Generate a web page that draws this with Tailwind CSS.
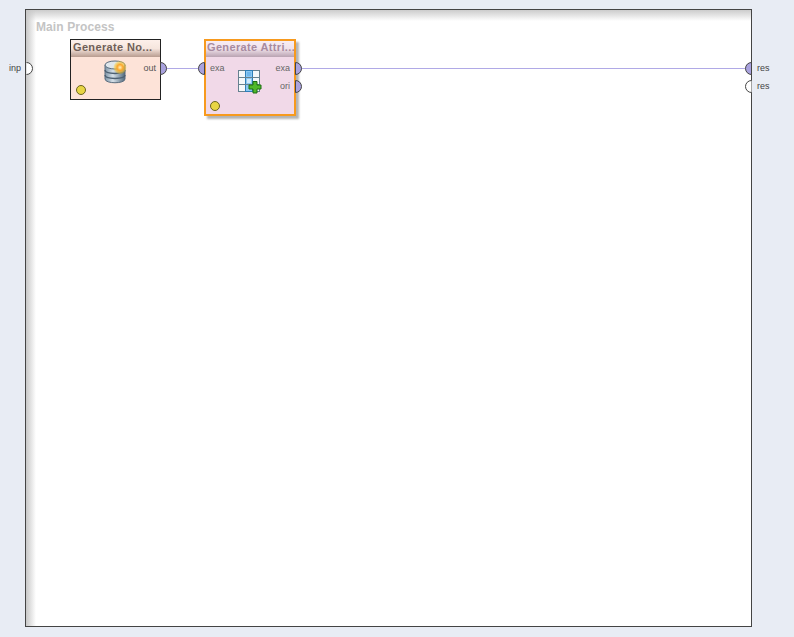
<!DOCTYPE html>
<html lang="en">
<head>
  <meta charset="UTF-8" />
  <title>Main Process</title>
  <script src="https://cdn.jsdelivr.net/npm/@tailwindcss/browser@4"></script>
</head>
<body class="w-[794px] h-[637px] bg-[#e8ecf4] overflow-hidden font-['Liberation_Sans',sans-serif]">
  <div class="relative w-[794px] h-[637px]">

    <!-- process canvas -->
    <div class="absolute left-[25px] top-[9px] w-[727px] h-[618px] border border-[#444444] bg-white">
      <div class="absolute left-0 top-0 w-full h-[11px] bg-gradient-to-b from-[#cccccc] to-white"></div>
      <div class="absolute left-0 top-0 h-full w-[10px] bg-gradient-to-r from-[#c8c8c8] to-white/0"></div>
      <div class="absolute left-[10px] top-[10px] text-[12px] leading-[15px] font-bold tracking-[0.1px] text-[#c4c4c4]">Main Process</div>
    </div>

    <!-- connections -->
    <svg class="absolute left-0 top-0" width="794" height="637">
      <line x1="166" y1="68.5" x2="199" y2="68.5" stroke="#b0a9e6" />
      <line x1="301" y1="68.5" x2="746" y2="68.5" stroke="#b0a9e6" />
    </svg>

    <!-- process ports -->
    <span class="absolute left-[9px] top-[62px] text-[9px] leading-[12px] text-[#444444]">inp</span>
    <span class="absolute left-[757px] top-[62px] text-[9px] leading-[12px] text-[#444444]">res</span>
    <span class="absolute left-[757px] top-[80px] text-[9px] leading-[12px] text-[#444444]">res</span>
    <svg class="absolute left-[26px] top-[62px]" width="7" height="13"><path d="M0.5 0.5 A6 6 0 0 1 0.5 12.5" fill="#fff" stroke="#444" /></svg>
    <svg class="absolute left-[745px] top-[62px]" width="7" height="13"><path d="M6.5 0.5 A6 6 0 0 0 6.5 12.5 Z" fill="#a9a2de" stroke="#444" /></svg>
    <svg class="absolute left-[745px] top-[80px]" width="7" height="13"><path d="M6.5 0.5 A6 6 0 0 0 6.5 12.5" fill="#fff" stroke="#444" /></svg>

    <!-- Generate Nominal operator -->
    <div class="absolute left-[70px] top-[39px] w-[91px] h-[61px] border border-[#222222] bg-[#fde3d8]">
      <div class="h-[17px] pl-[2px] text-[11px] leading-[14px] font-bold text-[#6f5f58] bg-gradient-to-b from-[#fdf0ea] via-[#f6e6de] to-[#b89c90] whitespace-nowrap tracking-[0.35px]">Generate No...</div>
      <span class="absolute right-[4px] top-[22px] text-[9px] leading-[12px] text-[#555555]">out</span>
      <svg class="absolute left-[33px] top-[20px]" width="24" height="25" viewBox="0 0 24 25">
        <defs>
          <linearGradient id="db" x1="0" x2="1" y1="0" y2="0">
            <stop offset="0" stop-color="#7f96a8" />
            <stop offset="0.4" stop-color="#d5e0e8" />
            <stop offset="1" stop-color="#526a7d" />
          </linearGradient>
          <radialGradient id="spark">
            <stop offset="0" stop-color="#fff2c0" />
            <stop offset="0.45" stop-color="#fba52a" />
            <stop offset="1" stop-color="#fdd835" stop-opacity="0.3" />
          </radialGradient>
        </defs>
        <path d="M1 5 V19 C1 24 21 24 21 19 V5 Z" fill="url(#db)" stroke="#5a6d7e" />
        <ellipse cx="11" cy="5" rx="10" ry="4" fill="#dfe7ec" stroke="#5a6d7e" />
        <path d="M1 10 C1 14.500 21 14.500 21 10 M1 15 C1 19.500 21 19.500 21 15" fill="none" stroke="#4d6072" stroke-width="1.5" />
        <circle cx="16" cy="7.500" r="6.500" fill="url(#spark)" />
      </svg>
      <span class="absolute left-[5px] top-[45px] w-[10px] h-[10px] rounded-full border border-[#6b6420] bg-[#e8d544]"></span>
    </div>
    <svg class="absolute left-[160px] top-[62px]" width="7" height="13"><path d="M0.5 0.5 A6 6 0 0 1 0.5 12.5 Z" fill="#a9a2de" stroke="#444" /></svg>

    <!-- Generate Attributes operator -->
    <div class="absolute left-[204px] top-[39px] w-[92px] h-[77px] border-2 border-[#f79a1e] bg-[#f1d9e8] shadow-[3px_3px_2px_#b4b4b4]">
      <div class="h-[16px] pl-[1px] text-[11px] leading-[13px] font-bold text-[#a78a9f] bg-gradient-to-b from-[#f8edf4] via-[#f0e2ea] to-[#b9a3b2] whitespace-nowrap overflow-hidden tracking-[0.35px]">Generate Attri...</div>
      <span class="absolute left-[4px] top-[21px] text-[9px] leading-[12px] text-[#666666]">exa</span>
      <span class="absolute right-[4px] top-[21px] text-[9px] leading-[12px] text-[#666666]">exa</span>
      <span class="absolute right-[4px] top-[39px] text-[9px] leading-[12px] text-[#666666]">ori</span>
      <svg class="absolute left-[32px] top-[29px]" width="24" height="24" viewBox="0 0 24 24">
        <rect x="0.500" y="0.500" width="21" height="21" fill="#f4f8fa" stroke="#66818f" />
        <rect x="7.500" y="0.500" width="7" height="21" fill="#8cc8f2" stroke="#2f7fb8" />
        <rect x="9" y="2" width="4" height="4" fill="#6db6ec" />
        <rect x="9" y="9" width="4" height="4" fill="#cfe9fb" />
        <path d="M0.500 7.500 H21.500 M0.500 14.500 H21.500" stroke="#66818f" />
        <path d="M15 11.500 H19 V15 H23 V19 H19 V23 H15 V19 H11 V15 H15 Z" fill="#4fb82a" stroke="#1d6e12" />
      </svg>
      <span class="absolute left-[4px] top-[60px] w-[10px] h-[10px] rounded-full border border-[#6b6420] bg-[#e8d544]"></span>
    </div>
    <svg class="absolute left-[198px] top-[62px]" width="7" height="13"><path d="M6.500 0.500 A6 6 0 0 0 6.500 12.500 Z" fill="#a9a2de" stroke="#444" /></svg>
    <svg class="absolute left-[295px] top-[62px]" width="7" height="13"><path d="M0.500 0.500 A6 6 0 0 1 0.500 12.500 Z" fill="#a9a2de" stroke="#444" /></svg>
    <svg class="absolute left-[295px] top-[80px]" width="7" height="13"><path d="M0.500 0.500 A6 6 0 0 1 0.500 12.500 Z" fill="#a9a2de" stroke="#444" /></svg>
  </div>
</body>
</html>
